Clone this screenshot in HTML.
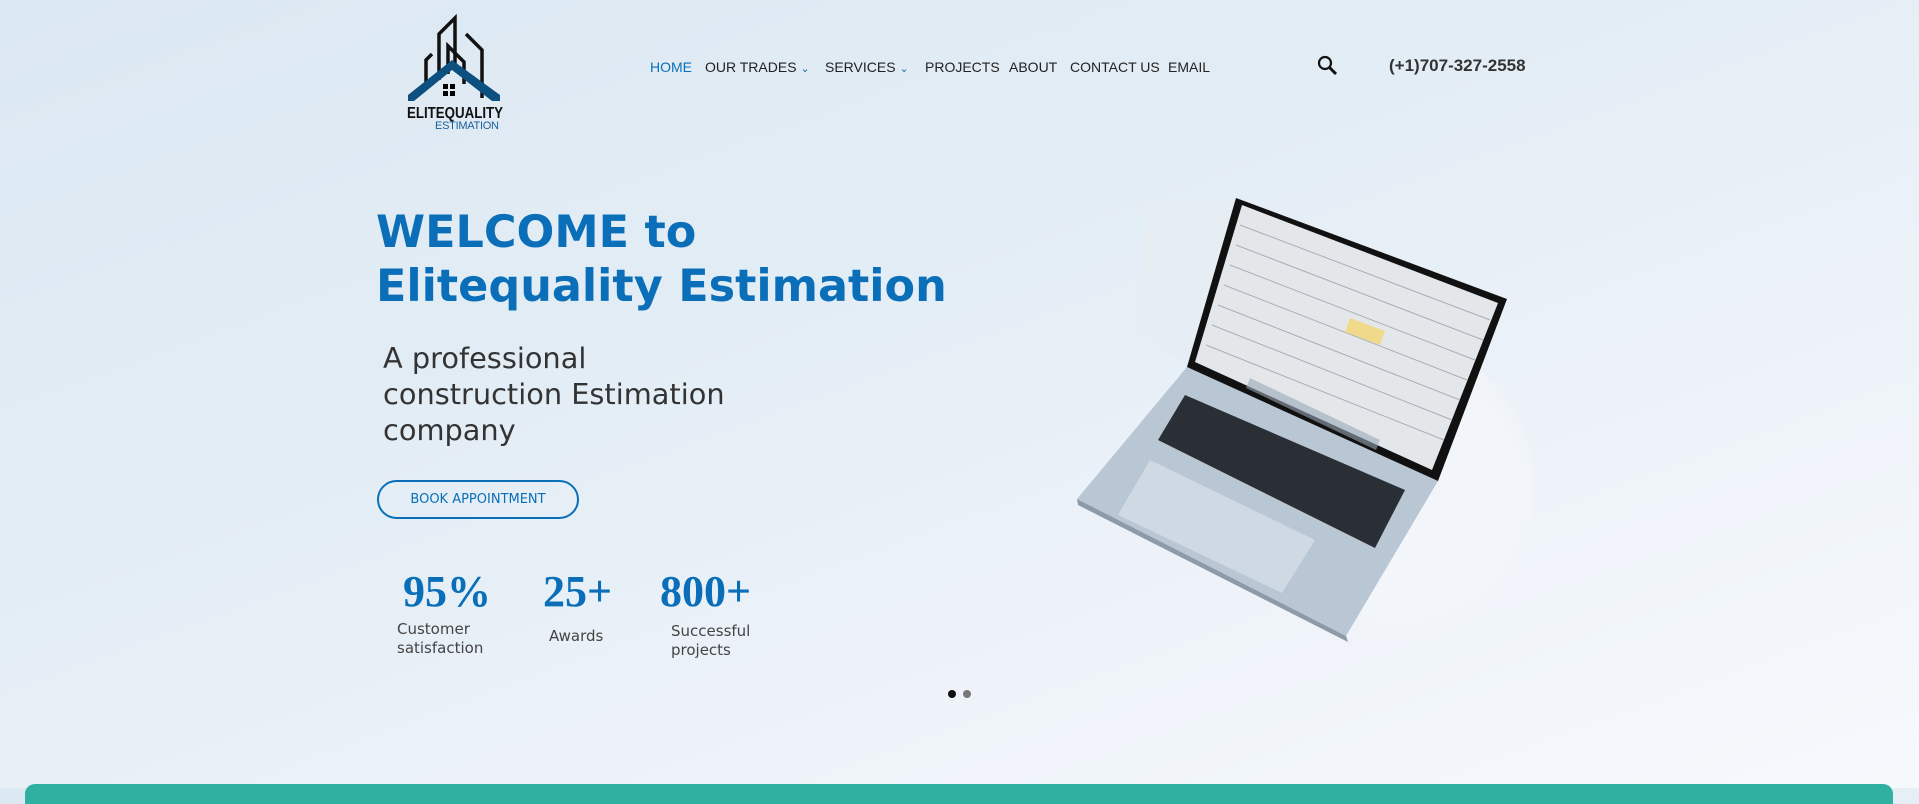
<!DOCTYPE html>
<html><head><meta charset="utf-8"><style>
*{margin:0;padding:0;box-sizing:border-box}
body{width:1919px;height:788px;overflow:hidden;font-family:"Liberation Sans",sans-serif;background:linear-gradient(160deg,#dce8f2 0%,#e3edf5 40%,#eef3f9 70%,#f6f9fc 100%);position:relative}
.a{position:absolute;white-space:nowrap}
.nav{top:59px;font-size:14px;color:#222}
h1{position:absolute;left:376px;top:206px;font:bold 44.5px/54px "DejaVu Sans",sans-serif;color:#0a6fb8}
.sub{left:383px;top:340px;font:28.8px/36px "DejaVu Sans",sans-serif;color:#333;white-space:normal;width:480px}
.btn{left:377px;top:480px;width:202px;height:39px;border:2px solid #0a6fb8;border-radius:20px;color:#0a6fb8;font:13px/35px "DejaVu Sans",sans-serif;text-align:center}
.num{font:bold 44px "Liberation Serif",serif;color:#0a6fb8;top:566px}
.lbl{font:15px/19px "DejaVu Sans",sans-serif;color:#444}
</style></head><body>
<svg class="a" style="left:404px;top:14px" width="104" height="116" viewBox="0 0 104 116">
<g fill="none" stroke="#111" stroke-width="3.5">
<path d="M22 72V46l6-6"/><path d="M35 66V20l16-16v50"/><path d="M44 60V32l16 16v22"/><path d="M62 20l16 16v48"/>
</g>
<path d="M4 81L48 46l48 35v6H88L48 56 10 87H4z" fill="#0d4f7f"/>
<rect x="39" y="70" width="5" height="5"/><rect x="46" y="70" width="5" height="5"/><rect x="39" y="77" width="5" height="5"/><rect x="46" y="77" width="5" height="5"/>
<text x="3" y="104" font-family="Liberation Sans" font-weight="bold" font-size="16" fill="#111" textLength="96" lengthAdjust="spacingAndGlyphs">ELITEQUALITY</text>
<text x="31" y="115" font-family="Liberation Sans" font-size="11" fill="#1a5f9a" textLength="64">ESTIMATION</text>
</svg>
<div class="a nav" style="left:650px;color:#0a6fb8">HOME</div>
<div class="a nav" style="left:705px">OUR TRADES <span style="color:#0a6fb8;font-size:11px">&#8964;</span></div>
<div class="a nav" style="left:825px">SERVICES <span style="color:#0a6fb8;font-size:11px">&#8964;</span></div>
<div class="a nav" style="left:925px">PROJECTS</div>
<div class="a nav" style="left:1009px">ABOUT</div>
<div class="a nav" style="left:1070px">CONTACT US</div>
<div class="a nav" style="left:1168px">EMAIL</div>
<svg class="a" style="left:1317px;top:55px" width="22" height="22" viewBox="0 0 22 22"><circle cx="8" cy="8" r="6" fill="none" stroke="#111" stroke-width="2.2"/><path d="M12.5 12.5L19 19" stroke="#111" stroke-width="3"/></svg>
<div class="a" style="left:1389px;top:56px;font-weight:bold;font-size:17px;color:#333">(+1)707-327-2558</div>
<h1>WELCOME to<br>Elitequality Estimation</h1>
<div class="a sub">A professional<br>construction Estimation<br>company</div>
<div class="a btn">BOOK APPOINTMENT</div>
<div class="a num" style="left:403px">95%</div>
<div class="a num" style="left:543px">25+</div>
<div class="a num" style="left:660px">800+</div>
<div class="a lbl" style="left:397px;top:620px">Customer<br>satisfaction</div>
<div class="a lbl" style="left:549px;top:627px">Awards</div>
<div class="a lbl" style="left:671px;top:622px">Successful<br>projects</div>
<div class="a" style="left:1260px;top:340px;width:275px;height:300px;border-radius:50%;background:radial-gradient(circle,#f3f6fa 60%,#e8eef5 100%);opacity:.8"></div>
<svg class="a" style="left:0;top:0" width="1919" height="788">
<polygon points="1147,200 1236,198 1187,367 1140,330" fill="#e6ecf2" opacity=".8"/>
<polygon points="1187,367 1438,481 1346,636 1077,499" fill="#b9c6d4"/>
<polygon points="1077,499 1346,636 1348,642 1078,505" fill="#8d9aa8"/>
<polygon points="1185,395 1405,490 1375,548 1158,440" fill="#2a2f36"/>
<polygon points="1150,460 1315,540 1282,593 1118,515" fill="#cfd9e3"/>
<polygon points="1236,198 1507,299 1438,481 1187,367" fill="#111"/>
<polygon points="1242,205 1498,303 1432,470 1195,362" fill="#e4e7ea"/>
<g stroke="#a8adb4" stroke-width="1">
<line x1="1240" y1="225" x2="1490" y2="320"/><line x1="1236" y1="245" x2="1483" y2="340"/><line x1="1230" y1="265" x2="1475" y2="360"/><line x1="1224" y1="285" x2="1467" y2="380"/><line x1="1218" y1="305" x2="1460" y2="400"/><line x1="1212" y1="325" x2="1452" y2="420"/><line x1="1206" y1="345" x2="1444" y2="440"/>
</g>
<polygon points="1350,318 1385,331 1380,345 1345,332" fill="#f0d98a"/>
<polygon points="1250,378 1380,440 1376,450 1246,388" fill="#9aa8b8" opacity=".6"/>
<circle cx="952" cy="694" r="4" fill="#111"/><circle cx="967" cy="694" r="4" fill="#777"/>
</svg>
<div class="a" style="left:25px;top:784px;width:1868px;height:20px;background:#2fb0a0;border-radius:10px 10px 0 0"></div>
</body></html>
